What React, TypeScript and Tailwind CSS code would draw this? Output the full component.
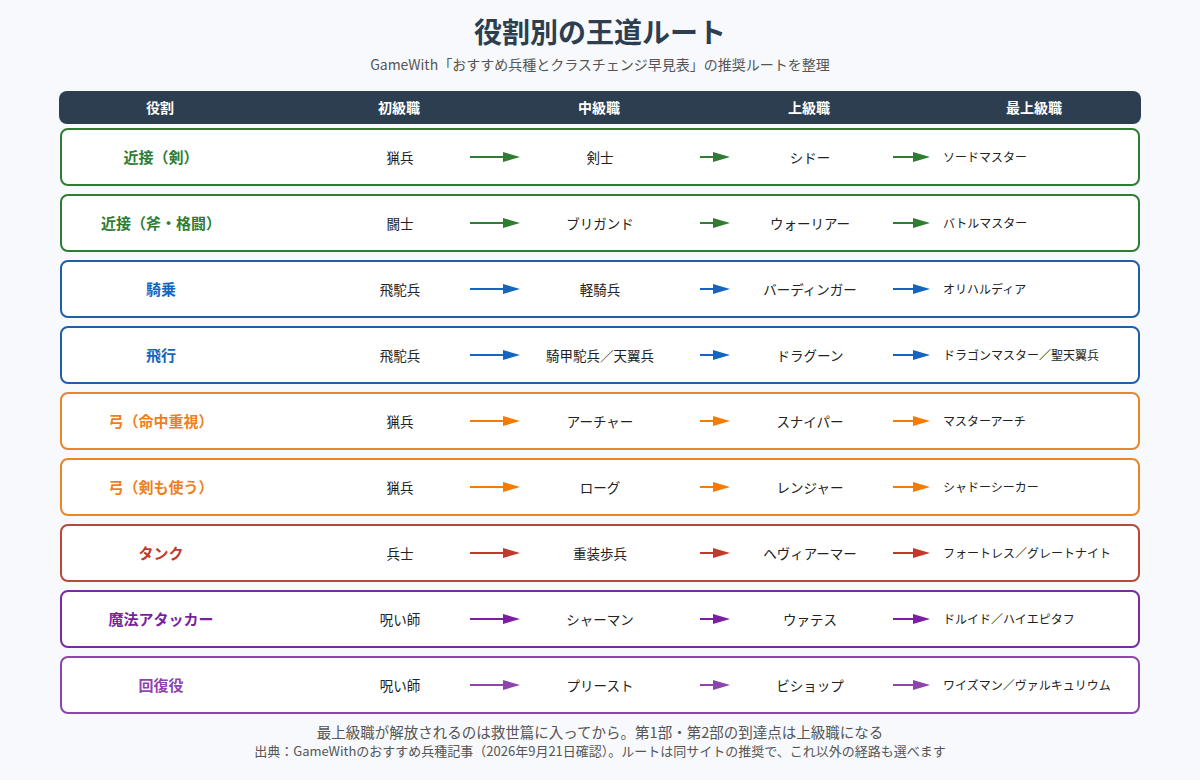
type Route = {
    role: string;
    color: string;
    border: string;
    steps: [string, string, string, string];
};

const routes: Route[] = [
    { role: '近接（剣）', color: 'text-[#2e7d32]', border: 'border-[#2e7d32]', steps: ['猟兵', '剣士', 'シドー', 'ソードマスター'] },
    { role: '近接（斧・格闘）', color: 'text-[#2e7d32]', border: 'border-[#2e7d32]', steps: ['闘士', 'ブリガンド', 'ウォーリアー', 'バトルマスター'] },
    { role: '騎乗', color: 'text-[#1565c0]', border: 'border-[#1f5fa8]', steps: ['飛駝兵', '軽騎兵', 'バーディンガー', 'オリハルディア'] },
    { role: '飛行', color: 'text-[#1565c0]', border: 'border-[#1f5fa8]', steps: ['飛駝兵', '騎甲駝兵／天翼兵', 'ドラグーン', 'ドラゴンマスター／聖天翼兵'] },
    { role: '弓（命中重視）', color: 'text-[#ef7f1a]', border: 'border-[#e8862a]', steps: ['猟兵', 'アーチャー', 'スナイパー', 'マスターアーチ'] },
    { role: '弓（剣も使う）', color: 'text-[#ef7f1a]', border: 'border-[#e8862a]', steps: ['猟兵', 'ローグ', 'レンジャー', 'シャドーシーカー'] },
    { role: 'タンク', color: 'text-[#c0392b]', border: 'border-[#b9483a]', steps: ['兵士', '重装歩兵', 'ヘヴィアーマー', 'フォートレス／グレートナイト'] },
    { role: '魔法アタッカー', color: 'text-[#7b1fa2]', border: 'border-[#7b2aa0]', steps: ['呪い師', 'シャーマン', 'ウァテス', 'ドルイド／ハイエピタフ'] },
    { role: '回復役', color: 'text-[#8e44ad]', border: 'border-[#8e44ad]', steps: ['呪い師', 'プリースト', 'ビショップ', 'ワイズマン／ヴァルキュリウム'] },
];

const arrowFill: Record<string, string> = {
    'text-[#2e7d32]': '#2e7d32',
    'text-[#1565c0]': '#1565c0',
    'text-[#ef7f1a]': '#f57c00',
    'text-[#c0392b]': '#c0392b',
    'text-[#7b1fa2]': '#7b1fa2',
    'text-[#8e44ad]': '#8e44ad',
};

const Arrow = ({ width, fill }: { width: number; fill: string }) => (
    <svg width={width} height={12} viewBox={`0 0 ${width} 12`} className="shrink-0">
        <line x1={0} y1={6} x2={width - 16} y2={6} stroke={fill} strokeWidth={2} />
        <polygon points={`${width - 17},1 ${width},6 ${width - 17},11`} fill={fill} />
    </svg>
);

export default function App() {
    return (
        <div className="flex min-h-[780px] w-[1200px] flex-col items-center bg-[#f7f9fc] font-['Noto_Sans_CJK_JP',sans-serif] text-[#222]">
            {/* Title */}
            <h1 className="mt-[12px] text-[28px] font-bold leading-[38px] text-[#2c3e50]">役割別の王道ルート</h1>
            <p className="mt-[5px] text-[14px] leading-[18px] text-[#555]">
                GameWith「おすすめ兵種とクラスチェンジ早見表」の推奨ルートを整理
            </p>

            {/* Header */}
            <div className="mt-[18px] flex h-[33px] w-[1082px] items-center rounded-lg bg-[#2c3e50] text-[14px] font-bold text-white">
                <div className="w-[202px] shrink-0 text-center">役割</div>
                <div className="ml-[78px] w-[120px] shrink-0 text-center">初級職</div>
                <div className="ml-[60px] w-[160px] shrink-0 text-center">中級職</div>
                <div className="ml-[50px] w-[160px] shrink-0 text-center">上級職</div>
                <div className="ml-[65px] w-[160px] shrink-0 text-center">最上級職</div>
            </div>

            {/* Rows */}
            <div className="mt-[4px] flex w-[1080px] flex-col gap-[8px]">
                {routes.map((r, i) => {
                    const fill = arrowFill[r.color];
                    return (
                        <div
                            key={i}
                            className={`flex h-[58px] items-center rounded-lg border-2 bg-white ${r.border}`}
                        >
                            <div className={`w-[198px] shrink-0 text-center text-[15px] font-bold ${r.color}`}>{r.role}</div>
                            <div className="ml-[80px] w-[120px] shrink-0 text-center text-[13.5px]">{r.steps[0]}</div>
                            <div className="ml-[10px]">
                                <Arrow width={50} fill={fill} />
                            </div>
                            <div className="w-[160px] shrink-0 text-center text-[13.5px]">{r.steps[1]}</div>
                            <div className="ml-[20px]">
                                <Arrow width={30} fill={fill} />
                            </div>
                            <div className="w-[160px] shrink-0 text-center text-[13.5px]">{r.steps[2]}</div>
                            <div className="ml-[3px]">
                                <Arrow width={37} fill={fill} />
                            </div>
                            <div className="ml-[13px] text-[12px]">{r.steps[3]}</div>
                        </div>
                    );
                })}
            </div>

            {/* Footer */}
            <p className="mt-[8px] text-[14.5px] leading-[20px] text-[#555]">
                最上級職が解放されるのは救世篇に入ってから。第1部・第2部の到達点は上級職になる
            </p>
            <p className="text-[13px] leading-[17px] text-[#555]">
                出典：GameWithのおすすめ兵種記事（2026年9月21日確認）。ルートは同サイトの推奨で、これ以外の経路も選べます
            </p>
        </div>
    );
}
